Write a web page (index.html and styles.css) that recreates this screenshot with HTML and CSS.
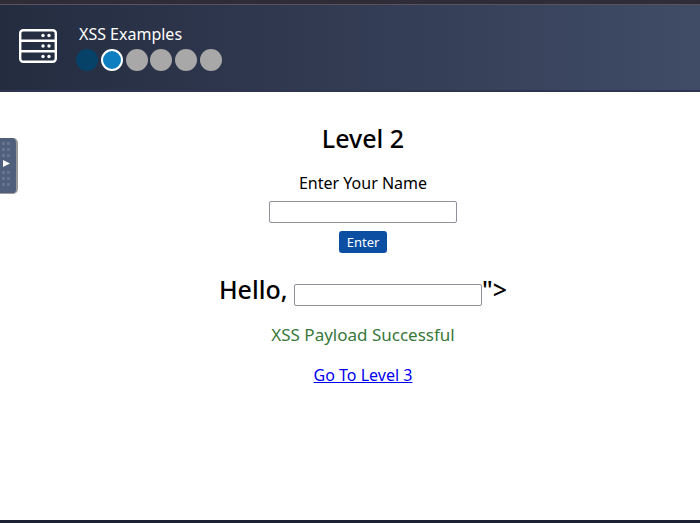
FILE: index.html
```html
<!DOCTYPE html>
<html lang="en">

<head>
  <meta charset="utf-8">
  <title>XSS Examples</title>
  <link rel="stylesheet" href="styles.css">
</head>

<body>
  <div class="topstrip"></div>
  <header class="header">
    <svg class="logo" width="38" height="34" viewBox="0 0 38 34" fill="none" stroke="#fff" stroke-width="2.4">
      <rect x="1.2" y="1.2" width="35.6" height="31.6" rx="3"></rect>
      <path d="M1 11.7H37M1 22.3H37"></path>
      <g fill="#fff" stroke="none">
        <circle cx="24" cy="6.5" r="1.7"></circle>
        <circle cx="30" cy="6.5" r="1.7"></circle>
        <circle cx="24" cy="17" r="1.7"></circle>
        <circle cx="30" cy="17" r="1.7"></circle>
        <circle cx="24" cy="27.5" r="1.7"></circle>
        <circle cx="30" cy="27.5" r="1.7"></circle>
      </g>
    </svg>
    <div class="brand">
      <div class="brand-title">XSS Examples</div>
      <div class="steps">
        <span class="step done"></span>
        <span class="step current"></span>
        <span class="step"></span>
        <span class="step"></span>
        <span class="step"></span>
        <span class="step"></span>
      </div>
    </div>
  </header>

  <div class="sidetab">
    <svg width="16" height="56" viewBox="0 0 16 56">
      <g fill="#65748f">
        <rect x="2" y="4" width="3" height="3"></rect>
        <rect x="7" y="4" width="3" height="3"></rect>
        <rect x="2" y="10" width="3" height="3"></rect>
        <rect x="7" y="10" width="3" height="3"></rect>
        <rect x="2" y="16" width="3" height="3"></rect>
        <rect x="7" y="16" width="3" height="3"></rect>
        <rect x="2" y="33" width="3" height="3"></rect>
        <rect x="7" y="33" width="3" height="3"></rect>
        <rect x="2" y="39" width="3" height="3"></rect>
        <rect x="7" y="39" width="3" height="3"></rect>
        <rect x="2" y="45" width="3" height="3"></rect>
        <rect x="7" y="45" width="3" height="3"></rect>
      </g>
      <path d="M3 22L10 25.5L3 29Z" fill="#fff"></path>
    </svg>
  </div>

  <main class="content">
    <h2 class="level-title">Level 2</h2>
    <form class="name-form">
      <label class="name-label" for="name">Enter Your Name</label>
      <input class="text-input" id="name" type="text">
      <button class="enter-btn" type="button">Enter</button>
    </form>
    <h2 class="hello">Hello, <input class="text-input" type="text">"&gt;</h2>
    <p class="success">XSS Payload Successful</p>
    <a class="next-link" href="#">Go To Level 3</a>
  </main>

  <div class="bottomstrip"></div>
</body>

</html>
```

FILE: styles.css
```css
* {
  margin: 0;
  padding: 0;
  box-sizing: border-box;
}

html,
body {
  height: 100%;
}

body {
  display: flex;
  flex-direction: column;
  font-family: "Noto Sans", sans-serif;
  font-size: 16px;
  color: #000;
  background-color: #fff;
  overflow: hidden;
}

.topstrip {
  height: 5px;
  flex: none;
  background-color: #2f2c38;
  border-bottom: 1px solid #55555f;
}

.header {
  height: 87px;
  flex: none;
  display: flex;
  align-items: center;
  gap: 19px;
  padding: 0 0 0 19px;
  background: linear-gradient(90deg, #242c40, #404b66);
  border-bottom: 2px solid #2d3550;
}

.logo {
  flex: none;
  margin-top: -3px;
}

.brand {
  display: flex;
  flex-direction: column;
  gap: 3px;
  margin-top: -3px;
}

.brand-title {
  font-size: 16px;
  line-height: 24px;
  color: #fff;
  margin-left: 3px;
}

.steps {
  display: flex;
  gap: 2.8px;
}

.step {
  width: 22px;
  height: 22px;
  border-radius: 50%;
  background-color: #a8a8a8;
}

.step.done {
  background-color: #064268;
}

.step.current {
  background-color: #0d7ec0;
  border: 2px solid #fff;
}

.sidetab {
  position: absolute;
  left: 0;
  top: 138px;
  width: 18px;
  height: 56px;
  background-color: #4f5f7c;
  border-radius: 0 5px 5px 0;
  border-right: 2px solid #9a9a9a;
  border-bottom: 1px solid #9a9a9a;
}

.content {
  flex: 1;
  display: flex;
  flex-direction: column;
  align-items: center;
  padding-top: 29px;
  padding-left: 26px;
}

.level-title {
  font-size: 25px;
  font-weight: 500;
  line-height: 34px;
}

.name-form {
  display: flex;
  flex-direction: column;
  align-items: center;
  margin-top: 17px;
}

.name-label {
  line-height: 22px;
}

.text-input {
  width: 188px;
  height: 22px;
  border: 1px solid #8f8f9d;
  border-radius: 2px;
  background-color: #fff;
}

.name-form .text-input {
  margin-top: 7px;
}

.enter-btn {
  width: 48px;
  height: 22px;
  margin-top: 8px;
  font-family: inherit;
  font-size: 13px;
  color: #fff;
  background-color: #0b4ea2;
  border: none;
  border-radius: 3px;
}

.hello {
  margin-top: 18px;
  font-size: 25px;
  font-weight: 500;
  line-height: 36px;
}

.success {
  margin-top: 16px;
  font-size: 17px;
  line-height: 24px;
  color: #38783a;
}

.next-link {
  margin-top: 16px;
  line-height: 24px;
  color: #0000ee;
}

.bottomstrip {
  height: 3px;
  flex: none;
  background-color: #1c2233;
}
```
